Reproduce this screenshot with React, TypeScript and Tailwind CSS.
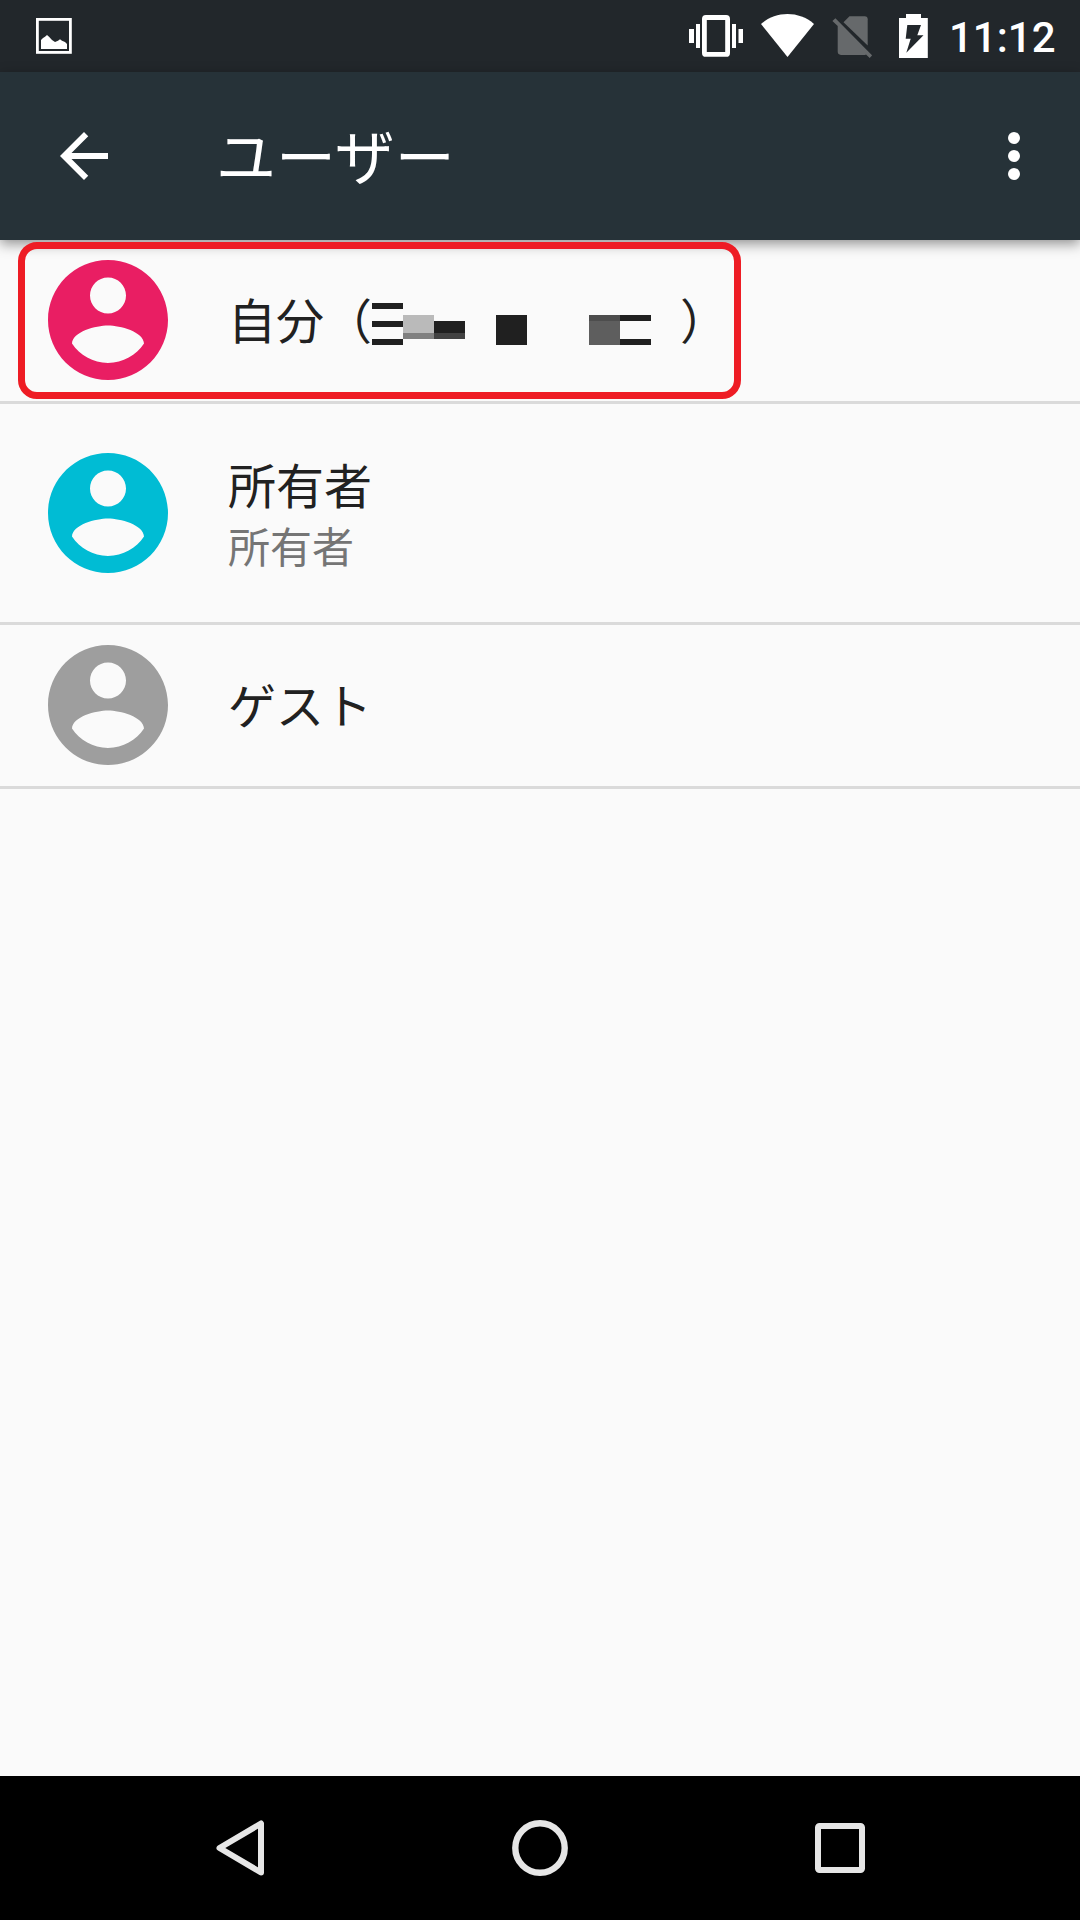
import React from "react";

function Avatar({ className }: { className: string }) {
  return (
    <svg viewBox="2 2 20 20" className={`h-[120px] w-[120px] shrink-0 ${className}`} fill="currentColor">
      <path d="M12 2C6.48 2 2 6.48 2 12s4.48 10 10 10 10-4.48 10-10S17.52 2 12 2zm0 2.9c1.66 0 3 1.34 3 3.02s-1.34 3-3 3-3-1.34-3-3 1.34-3.02 3-3.02zm0 14.25c-2.5 0-4.71-1.28-6-3.22.03-1.99 4-3.03 6-3.03 1.99 0 5.97 1.04 6 3.03-1.29 1.94-3.5 3.22-6 3.22z" />
    </svg>
  );
}

/* Pixelated block that hides the account name */
function Mosaic() {
  return (
    <svg width="279" height="42" viewBox="0 0 279 42" className="mt-[63px] shrink-0" shapeRendering="crispEdges" fill="#202020">
      <path d="M0 0h31v6H0zM0 18h31v6H0zM0 36h31v6H0z" />
      <path d="M31 12h31v18H31z" fill="#bababa" />
      <path d="M31 30h31v6H31z" fill="#808080" />
      <path d="M62 18h31v12H62z" />
      <path d="M62 30h31v6H62z" fill="#424242" />
      <path d="M124 12h31v30h-31z" />
      <path d="M217 12h31v6h-31z" fill="#4d4d4d" />
      <path d="M217 18h31v24h-31z" fill="#5e5e5e" />
      <path d="M248 12h31v6h-31zM248 36h31v6h-31z" />
    </svg>
  );
}

function StatusBar() {
  return (
    <div className="flex h-[72px] shrink-0 items-start justify-between bg-[#22272b] pr-[24px] pl-[36px] text-white">
      <svg width="36" height="36" viewBox="0 0 36 36" className="mt-[18px]">
        <rect x="1.4" y="1.4" width="33" height="33" fill="none" stroke="#fff" strokeWidth="2.8" />
        <path d="M5 31V22l2-2 2-1.2 2-1.8 2 1.8 3 3.2 3 2 3-1.2 2-1.6 2 1.6 3 1.2 2 2v5z" fill="#fff" />
      </svg>
      <div className="flex items-start">
        <svg width="54" height="44" viewBox="689 14 54 44" className="mr-[18px] mt-[14px]" fill="#fff">
          <rect x="704.4" y="17.5" width="23.2" height="36.9" rx="1.5" fill="none" stroke="#fff" strokeWidth="4.8" />
          <path d="M689 29h5v14h-5zM696 24h4v24h-4zM732 24h4v24h-4zM738.5 29h4.500v14h-4.500z" />
        </svg>
        <svg width="53" height="44" viewBox="761 14 53 44" className="mr-[18px] mt-[14px]" fill="#fff">
          <path d="M761 24C776 10.800 799 10.800 814 24L787.500 57z" />
        </svg>
        <svg width="40" height="44" viewBox="832 14 40 44" className="mr-[27px] mt-[14px]" fill="#66696b">
          <path d="M843.500 22.200L849.500 16.200H864.700a3 3 0 0 1 3 3V45.600z" />
          <path d="M835.400 18.300L872.200 55.400 869.700 58 866 54.400Q865.200 54.900 864 54.900H841a3.300 3.300 0 0 1-3.300-3.300V25.900L832.400 20.900z" />
        </svg>
        <svg width="29" height="44" viewBox="899 14 29 44" className="mr-[21px] mt-[14px]">
          <path fill="#fff" d="M906 14h15v4h6.800v40H899V18h7z" />
          <path fill="#22272b" d="M907.300 25H921L917.300 35.300H923.500L906.300 52.800 910.700 38.700H905.700z" />
        </svg>
        <span className="mt-[14px] w-[107px] font-['Roboto'] text-[42px] leading-[48px] font-medium whitespace-nowrap">11:12</span>
      </div>
    </div>
  );
}

function Toolbar() {
  return (
    <header className="relative z-10 flex h-[168px] shrink-0 items-center bg-[#263238] pr-[60px] pl-[60px] text-white shadow-[0_4px_12px_rgba(0,0,0,0.42)]">
      <svg width="48" height="48" viewBox="4 4 16 16" fill="#fff">
        <path d="M20 11H7.830l5.590-5.590L12 4l-8 8 8 8 1.410-1.410L7.830 13H20v-2z" />
      </svg>
      <h1 className="-mt-[5px] ml-[108px] flex-1 text-[60px] leading-[84px] font-normal">ユーザー</h1>
      <svg width="12" height="48" viewBox="0 0 12 48" fill="#fff">
        <circle cx="6" cy="6" r="6" />
        <circle cx="6" cy="24" r="6" />
        <circle cx="6" cy="42" r="6" />
      </svg>
    </header>
  );
}

export default function App() {
  return (
    <div className="flex h-[1920px] w-[1080px] flex-col overflow-hidden bg-[#fafafa] font-['Noto_Sans_CJK_JP',sans-serif] text-[#212121]">
      <StatusBar />
      <Toolbar />
      <main className="flex-1">
        <div className="relative flex h-[164px] items-start border-b-[3px] border-[#dadada] pl-[48px]">
          <Avatar className="mt-[20px] text-[#e91e63]" />
          <div className="ml-[60px] flex items-start text-[48px] leading-[72px] whitespace-nowrap">
            <span className="mt-[42px] w-[144px]">自分（</span>
            <Mosaic />
            <span className="mt-[42px] ml-[29px]">）</span>
          </div>
          <div className="absolute top-[2px] left-[18px] z-20 h-[157px] w-[723px] rounded-[19px] border-[7px] border-[#ee1c24]" />
        </div>
        <div className="flex h-[221px] items-start border-b-[3px] border-[#dadada] pl-[48px]">
          <Avatar className="mt-[49px] text-[#00bcd4]" />
          <div className="mt-[43px] ml-[60px] flex flex-col">
            <span className="text-[48px] leading-[72px]">所有者</span>
            <span className="text-[42px] leading-[52px] text-[#757575]">所有者</span>
          </div>
        </div>
        <div className="flex h-[164px] items-start border-b-[3px] border-[#dadada] pl-[48px]">
          <Avatar className="mt-[20px] text-[#9e9e9e]" />
          <span className="mt-[42px] ml-[60px] text-[48px] leading-[72px]">ゲスト</span>
        </div>
      </main>
      <nav className="flex h-[144px] shrink-0 items-center justify-between bg-black pr-[215px] pl-[216px]">
        <svg width="48" height="56" viewBox="0 0 48 56" fill="none" stroke="#e6e6e6" strokeWidth="6" strokeLinejoin="round">
          <path d="M45 3.500V52.500L3.500 28z" />
        </svg>
        <svg width="56" height="56" viewBox="0 0 56 56" fill="none" stroke="#e6e6e6" strokeWidth="6.400">
          <circle cx="28" cy="28" r="24.700" />
        </svg>
        <svg width="50" height="50" viewBox="0 0 50 50" fill="none" stroke="#e6e6e6" strokeWidth="6">
          <rect x="3" y="3" width="44" height="44" rx="1.500" />
        </svg>
      </nav>
    </div>
  );
}
